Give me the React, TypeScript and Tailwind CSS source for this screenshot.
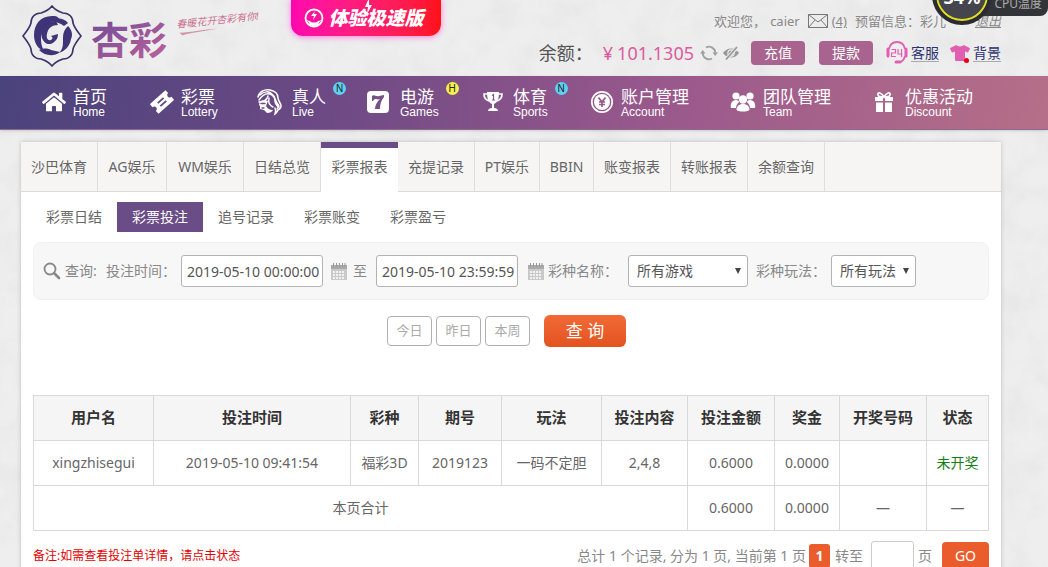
import React from 'react';
import { FaHome, FaTshirt } from 'react-icons/fa';

const TicketIcon = () => (
  <svg viewBox="0 0 24 24" className="w-6 h-6" fill="currentColor">
    <g transform="rotate(-42 12 12)">
      <path d="M1.500 5.500h21v4a2.500 2.500 0 0 0 0 5v4h-21v-4a2.500 2.500 0 0 0 0-5z" />
      <path d="M8 10h8M8 14h8" stroke="#5f4683" strokeWidth="1.800" />
    </g>
  </svg>
);

const LadyIcon = () => (
  <svg viewBox="0 0 26 28" className="w-[26px] h-7" fill="none" stroke="currentColor" strokeLinecap="round">
    <path d="M1 9C2 4 7 1 13 2c5 1 8 4 8 8 0 3 3 5 3 8 0 2-1 3-3 4-1 1-1 3-3 4 1-3 1-4 0-6" strokeWidth="1.500" />
    <path d="M2 12c4-6 8-8 13-5 4 3 2 6 4 9s3 4 1 5M3 7c4-4 9-4 12-1 3 2 3 5 4 7 1 3 3 3 3 6M2 14c5 0 8-2 9-6" strokeWidth="1.500" />
    <path d="M3 13l-1 4 1 1v3l4 1 3 3c3 0 5-1 6-3-4 0-6-2-7-4l2-5-3-1z" fill="currentColor" stroke="none" />
    <path d="M4 15.500h4M5 20h2" stroke="#6b4985" strokeWidth="1.300" />
    <path d="M12 10c-1 4 0 7 4 9" strokeWidth="1.500" />
  </svg>
);

const SevenIcon = () => (
  <svg viewBox="0 0 22 22" className="w-[22px] h-[22px]">
    <rect width="22" height="22" rx="4" fill="currentColor" />
    <path d="M5 5c2-2 4 1 7 0l5-1v2c-3 4-4 7-4 12H8c0-4 2-7 5-10-2 1-4 0-5 0s-1 1-2 2H5z" fill="#78508a" />
  </svg>
);

const CupIcon = () => (
  <svg viewBox="0 0 22 22" className="w-[22px] h-[22px]" fill="currentColor">
    <path d="M5 1h12c0 6-1 10-5 12v4c2 0 4 1 4 3H6c0-2 2-3 4-3v-4C6 11 5 7 5 1z" />
    <path d="M5 3H2c0 4 2 6 5 7M17 3h3c0 4-2 6-5 7" fill="none" stroke="currentColor" strokeWidth="1.700" />
    <path d="M10 4.500l1.500-1V9M10 9h3" fill="none" stroke="#87548a" strokeWidth="1.200" />
  </svg>
);

const CoinIcon = () => (
  <svg viewBox="0 0 24 24" className="w-6 h-6">
    <circle cx="12" cy="12" r="10.200" fill="none" stroke="currentColor" strokeWidth="1.700" />
    <circle cx="12" cy="12" r="8" fill="currentColor" />
    <path d="M8.500 7.500L12 12l3.500-4.500M12 12v5M9 12h6M9 14.500h6" fill="none" stroke="#965789" strokeWidth="1.700" />
  </svg>
);

const TeamIcon = () => (
  <svg viewBox="0 0 26 24" className="w-[26px] h-6" fill="currentColor">
    <circle cx="6" cy="6" r="3.600" />
    <circle cx="20" cy="6" r="3.600" />
    <path d="M1 18c-1-4 1-8 5-8 2 0 3 1 3 2-2 2-3 4-3 6zM25 18c1-4-1-8-5-8-2 0-3 1-3 2 2 2 3 4 3 6z" />
    <circle cx="13" cy="9.500" r="4.200" />
    <path d="M6.500 20c0-4 3-6 6.500-6s6.500 2 6.500 6c-3 2-10 2-13 0z" />
  </svg>
);

const GiftIcon = () => (
  <svg viewBox="0 0 20 22" className="w-5 h-[22px]" fill="currentColor">
    <path d="M1 6h8v4H1zM11 6h8v4h-8zM2 11.500h7V21H2zM11 11.500h7V21h-7z" />
    <path d="M10 6C8 2 3 0 4 4c0 2 3 2 6 2 3 0 6 0 6-2 1-4-4-2-6 2z" fill="none" stroke="currentColor" strokeWidth="1.700" />
  </svg>
);

const HeadsetIcon = () => (
  <svg viewBox="0 0 22 24" className="w-[22px] h-6" fill="none" stroke="#e05fb0">
    <path d="M3 8C4 3 7 1 11 1s7 2 8 7" strokeWidth="1.800" />
    <path d="M19 15c-1 4-3 6-6 6" strokeWidth="1.800" />
    <path d="M2 8v7M20 8v7" strokeWidth="3" strokeLinecap="round" />
    <path d="M10 21h4" strokeWidth="3" strokeLinecap="round" />
    <path d="M5.500 8.500h4v3.500h-4v3.500h4.500M12 8v5h4.500M15.500 8v8" strokeWidth="1.200" />
  </svg>
);

const RefreshIcon = () => (
  <svg viewBox="0 0 18 18" className="w-[18px] h-[18px]" fill="none" stroke="#a0a0a0" strokeWidth="1.800">
    <path d="M6 3.500A6.300 6.300 0 0 1 15.300 9M12 14.500A6.300 6.300 0 0 1 2.700 9" />
    <path d="M12.500 8.500h5.500L15.200 12zM0 9.500h5.500L2.800 6z" fill="#a0a0a0" stroke="none" />
  </svg>
);

const EyeOffIcon = () => (
  <svg viewBox="0 0 18 18" className="w-[18px] h-[18px]">
    <path d="M1 9c4-6 12-6 16 0-4 6-12 6-16 0z" fill="#999" />
    <circle cx="9" cy="9" r="3.200" fill="none" stroke="#eee" strokeWidth="1.200" />
    <path d="M4 15.500L15 3.500" stroke="#eee" strokeWidth="3.500" />
    <path d="M4 15.500L15 3" stroke="#999" strokeWidth="1.800" />
  </svg>
);

const CalendarIcon = () => (
  <svg viewBox="0 0 16 17" className="w-4 h-[17px] shrink-0">
    <path d="M0 2h16v4H0z" fill="#aaa" />
    <path d="M2.500 0v4M5.500 0v4M8.500 0v4M11.500 0v4M14 0v4" stroke="#999" />
    <path d="M0 6h16v11H0z" fill="#c9c9c9" />
    <path d="M2 9h12M2 12h12M2 15h12" stroke="#f2f2f2" strokeWidth="2" strokeDasharray="2 1" />
  </svg>
);

const SearchIcon = () => (
  <svg viewBox="0 0 18 18" className="w-[18px] h-[18px] shrink-0" fill="none" stroke="#888" strokeLinecap="round">
    <circle cx="7" cy="7" r="5.500" strokeWidth="1.800" />
    <path d="M11.500 11.500l4.500 4.500" strokeWidth="2.600" />
  </svg>
);

const Logo = () => (
  <svg viewBox="0 0 250 70" className="w-[250px] h-[70px]" role="img" aria-label="杏彩">
    <defs>
      <linearGradient id="brand" x1="0" y1="0" x2="1" y2="1">
        <stop offset="0" stopColor="#6c4a97" />
        <stop offset="1" stopColor="#c2629b" />
      </linearGradient>
    </defs>
    {/* flower frame with the dragon inside */}
    <path
      d="M31 2c4 5 8 6 11 7 6 0 10 4 10 10 1 4 4 8 8 13-4 5-7 9-8 13 0 6-4 10-10 10-3 1-7 2-11 7-4-5-8-6-11-7-6 0-10-4-10-10-1-4-4-8-8-13 4-5 7-9 8-13 0-6 4-10 10-10 3-1 7-2 11-7z"
      fill="none"
      stroke="#3b3268"
      strokeWidth="1.600"
    />
    <g fill="#3f3478">
      <path d="M33 12C20 11 13 20 13 31c0 8 4 14 10 16-5-9-4-21 5-27 3-3 7-4 11-4-1-2-3-4-6-4z" />
      <path d="M35 17c-10 0-16 8-14 17 2 6 8 8 12 4 3-2 4-5 4-8l-7 2c2 1 2 3 0 4-3 1-5-2-4-6 1-6 5-9 11-9z" />
      <path d="M30 17c6-4 13-3 17 2l-4 3c-4-3-8-4-13-5z" />
      <path d="M47 22c4 4 5 9 3 13-1 7-6 12-12 14 4-4 4-8 4-13 0-5 0-9 5-14z" />
      <path d="M18 46c4-2 9-2 12 0l9 2c-6 5-15 4-21-2z" />
    </g>
    <text x="70" y="50" fontSize="38" fontWeight="700" fill="url(#brand)">杏彩</text>
    <g transform="rotate(-6 156 26)" fill="#c9708f">
      <text x="156" y="24" fontSize="10" fontStyle="italic">春暖花开杏彩有你!</text>
      <path d="M158 29c12 1 26-1 38 0-14 1-26 1-35 3z" opacity=".7" />
    </g>
  </svg>
);

const navItems = [
  { title: '首页', sub: 'Home', width: 'w-[108px]', iconWidth: 'w-[31px]', icon: <FaHome className="w-6 h-6" /> },
  { title: '彩票', sub: 'Lottery', width: 'w-[107px]', iconWidth: 'w-[31px]', icon: <TicketIcon /> },
  { title: '真人', sub: 'Live', width: 'w-[110px]', iconWidth: 'w-[35px]', icon: <LadyIcon />, badge: 'N' },
  { title: '电游', sub: 'Games', width: 'w-[115px]', iconWidth: 'w-[33px]', icon: <SevenIcon />, badge: 'H' },
  { title: '体育', sub: 'Sports', width: 'w-[108px]', iconWidth: 'w-[31px]', icon: <CupIcon />, badge: 'N' },
  { title: '账户管理', sub: 'Account', width: 'w-[140px]', iconWidth: 'w-[31px]', icon: <CoinIcon /> },
  { title: '团队管理', sub: 'Team', width: 'w-[144px]', iconWidth: 'w-[33px]', icon: <TeamIcon /> },
  { title: '优惠活动', sub: 'Discount', width: 'w-[110px]', iconWidth: 'w-[31px]', icon: <GiftIcon /> },
];

const tabs = [
  { name: '沙巴体育', width: 'w-[77px]' },
  { name: 'AG娱乐', width: 'w-[69px]' },
  { name: 'WM娱乐', width: 'w-[77px]' },
  { name: '日结总览', width: 'w-[77px]' },
  { name: '彩票报表', width: 'w-[77px]' },
  { name: '充提记录', width: 'w-[77px]' },
  { name: 'PT娱乐', width: 'w-[65px]' },
  { name: 'BBIN', width: 'w-[54px]' },
  { name: '账变报表', width: 'w-[77px]' },
  { name: '转账报表', width: 'w-[77px]' },
  { name: '余额查询', width: 'w-[77px]' },
];
const subTabs = ['彩票日结', '彩票投注', '追号记录', '彩票账变', '彩票盈亏'];

const columns = [
  { name: '用户名', width: 'w-[120px]' },
  { name: '投注时间', width: 'w-[197px]' },
  { name: '彩种', width: 'w-[68px]' },
  { name: '期号', width: 'w-[83px]' },
  { name: '玩法', width: 'w-[100px]' },
  { name: '投注内容', width: 'w-[86px]' },
  { name: '投注金额', width: 'w-[87px]' },
  { name: '奖金', width: 'w-[65px]' },
  { name: '开奖号码', width: 'w-[87px]' },
  { name: '状态', width: 'w-[62px]' },
];

const record = ['xingzhisegui', '2019-05-10 09:41:54', '福彩3D', '2019123', '一码不定胆', '2,4,8', '0.6000', '0.0000', ''];

const Header = () => (
  <header className="flex items-start h-[76px] pl-[21px] pr-[47px]">
    <div className="w-[270px] shrink-0 pt-1">
      <Logo />
    </div>
    <a
      href="#lite"
      className="flex items-center justify-center gap-1 w-[150px] h-9 pr-1 shrink-0 rounded-b-xl bg-linear-to-r from-[#ff04b0] to-[#ff1212] shadow-[0_1px_6px_#ff7be0] text-white"
    >
      <svg viewBox="0 0 20 20" className="w-5 h-5">
        <circle cx="10" cy="10" r="8.500" fill="none" stroke="#fff" strokeWidth="1.800" />
        <path d="M1 10c1 3 4 3 5 7l4 2 4-2c1-4 4-4 5-7-1 2-3 3-5 3-1 2-7 2-8 0-2 0-4-1-5-3z" fill="#fff" />
        <path d="M11 3L7 8h3l-1 4 4-6h-3z" fill="#fff" />
      </svg>
      <span className="relative text-[19px] leading-6 font-black italic">
        体验极速版
        <svg viewBox="0 0 8 16" className="absolute left-9 -top-2 w-2 h-4" fill="#fff">
          <path d="M5 0L1 9h3l-1 7 5-9H5z" />
        </svg>
      </span>
    </a>

    <div className="flex-1 flex flex-col items-end pt-[11px]">
      <div className="flex items-center text-[13px] leading-5 text-[#888] whitespace-nowrap">
        <span>欢迎您，</span>
        <span className="ml-1">caier</span>
        <a href="#mail" className="flex items-center gap-1 ml-2">
          <svg viewBox="0 0 20 14" className="w-5 h-3.5" fill="none" stroke="#777">
            <path d="M.5.5h19v13H.5zM.5.5L10 8l9.500-7.500M.5 13.500L7 6M19.500 13.500L13 6" />
          </svg>
          <span className="underline">(4)</span>
        </a>
        <span className="ml-2">预留信息：</span>
        <span className="w-[55px]">彩儿</span>
        <a href="#logout" className="italic underline">退出</a>
      </div>
      <div className="flex items-center mt-2.5 h-6 whitespace-nowrap">
        <span className="text-lg text-[#555]">余额：</span>
        <span className="ml-2.5 text-lg text-[#dd5a9e]">¥</span>
        <span className="ml-1 mr-1.5 text-lg text-[#dd5a9e]">101.1305</span>
        <button aria-label="刷新" className="flex mr-1"><RefreshIcon /></button>
        <button aria-label="隐藏余额" className="flex mr-[11px]"><EyeOffIcon /></button>
        <button className="w-[54px] h-6 mr-3.5 rounded bg-[#a8648e] text-sm text-white">充值</button>
        <button className="w-[54px] h-6 mr-[13px] rounded bg-[#a8648e] text-sm text-white">提款</button>
        <a href="#service" className="flex items-center gap-[3px] mr-[11px] text-sm leading-[17px] text-[#2c3270]">
          <HeadsetIcon />
          <span className="border-b border-[#aaa]">客服</span>
        </a>
        <a href="#skin" className="relative flex items-center gap-[3px] text-sm leading-[17px] text-[#2c3270]">
          <FaTshirt className="w-5 h-5 text-[#e05fb0]" />
          <span className="absolute left-3.5 bottom-0 w-[5px] h-[5px] rounded-full bg-[#e60012]" />
          <span className="border-b border-[#aaa]">背景</span>
        </a>
      </div>
    </div>
  </header>
);

/* Floating desktop monitor, hangs over the top right corner */
const CpuWidget = () => (
  <div className="absolute right-0 top-0 w-[116px] h-[27px] overflow-hidden">
    <div className="absolute right-0 top-0 w-[72px] h-4 rounded-br-lg bg-[#333438] text-right pr-1.5 text-xs leading-2 text-[#aaa]">CPU温度</div>
    <div className="absolute left-0 -top-[35px] flex items-end justify-center w-[60px] h-[60px] pb-2.5 rounded-full border-4 border-[#2b2c33] bg-[#45464d] shadow-[inset_0_0_0_2px_#e2e21c] text-lg font-bold text-white">
      34%
    </div>
  </div>
);

const MainNav = () => (
  <nav className="flex h-[54px] pl-[42px] bg-[linear-gradient(100deg,#4b437c_0%,#6b4984_30%,#98588c_62%,#b66f88_100%)] border-b border-[#8d6a94] text-white shadow-sm">
    {navItems.map((item) => (
      <a key={item.title} href="#nav" className={`flex shrink-0 ${item.width}`}>
        <span className={`flex items-center shrink-0 h-[52px] ${item.iconWidth}`}>{item.icon}</span>
        <span className="pt-3 whitespace-nowrap">
          <span className="block text-[17px] leading-[17px]">{item.title}</span>
          <span className="block font-['Liberation_Sans',sans-serif] text-xs leading-[14px]">{item.sub}</span>
        </span>
        {item.badge && (
          <span
            className={`mt-1.5 ml-[7px] w-[13px] h-[13px] rounded-full text-center font-['Liberation_Sans',sans-serif] text-[10px] leading-[13px] text-[#222] ${
              item.badge === 'H' ? 'bg-[#f6f04c]' : 'bg-[#5fd0f3]'
            }`}
          >
            {item.badge}
          </span>
        )}
      </a>
    ))}
  </nav>
);

const SelectBox = ({ id, label, width }: { id: string; label: string; width: string }) => (
  <span className={`relative shrink-0 ${width}`}>
    <select id={id} className="w-full h-8 pl-2 appearance-none rounded-[3px] border border-[#b3b3b3] bg-white text-[#555] text-sm">
      <option>{label}</option>
    </select>
    <svg viewBox="0 0 6 6" className="absolute right-[7px] top-[13px] w-1.5 h-1.5 pointer-events-none" fill="#444">
      <path d="M0 0h6L3 6z" />
    </svg>
  </span>
);

const Filters = () => (
  <form>
    <div className="flex items-center mx-3 h-[58px] pl-[9px] rounded-lg border border-[#f1f1f1] bg-[#f7f7f7] text-sm text-[#888] whitespace-nowrap">
      <SearchIcon />
      <span className="w-[41px] ml-1">查询:</span>
      <label htmlFor="from" className="w-[75px]">投注时间：</label>
      <input id="from" defaultValue="2019-05-10 00:00:00" className="w-[142px] h-8 pl-[5px] rounded-[3px] border border-[#b3b3b3] bg-white text-[#555]" />
      <span className="flex ml-2 mr-1.5"><CalendarIcon /></span>
      <label htmlFor="to" className="w-[23px]">至</label>
      <input id="to" defaultValue="2019-05-10 23:59:59" className="w-[142px] h-8 pl-[5px] rounded-[3px] border border-[#b3b3b3] bg-white text-[#555]" />
      <span className="flex ml-2.5 mr-1"><CalendarIcon /></span>
      <label htmlFor="game" className="w-20">彩种名称：</label>
      <SelectBox id="game" label="所有游戏" width="w-[120px]" />
      <label htmlFor="play" className="w-[75px] ml-2">彩种玩法：</label>
      <SelectBox id="play" label="所有玩法" width="w-[85px]" />
    </div>
    <div className="flex items-center justify-center gap-1 h-8 mt-[15px] pr-[9px]">
      {['今日', '昨日', '本周'].map((day) => (
        <button key={day} type="button" className="w-[45px] h-[30px] rounded border border-[#b0b0b0] bg-white text-[13px] text-[#aaa]">
          {day}
        </button>
      ))}
      <button type="button" className="w-[82px] h-8 ml-2.5 rounded-md bg-linear-to-b from-[#f26a37] to-[#e2531f] text-[17px] text-white">查 询</button>
    </div>
  </form>
);

const Records = () => (
  <table className="w-full table-fixed border-collapse text-center text-sm text-[#666]">
    <thead>
      <tr className="h-[45px] bg-[#f5f5f5] text-[15px] text-[#333]">
        {columns.map((col) => (
          <th key={col.name} className={`border border-[#d9d9d9] font-bold ${col.width}`}>{col.name}</th>
        ))}
      </tr>
    </thead>
    <tbody>
      <tr className="h-[45px]">
        {record.map((cell, i) => (
          <td key={i} className="border border-[#d9d9d9]">{cell}</td>
        ))}
        <td className="border border-[#d9d9d9]"><a href="#detail" className="text-[#128012]">未开奖</a></td>
      </tr>
      <tr className="h-[45px]">
        <td colSpan={6} className="border border-[#d9d9d9]">本页合计</td>
        <td className="border border-[#d9d9d9]">0.6000</td>
        <td className="border border-[#d9d9d9]">0.0000</td>
        <td className="border border-[#d9d9d9]">—</td>
        <td className="border border-[#d9d9d9]">—</td>
      </tr>
    </tbody>
  </table>
);

const App = () => {
  return (
    <div className="relative isolate h-screen overflow-hidden bg-[#eeeeee] font-['Noto_Sans','Noto_Sans_CJK_SC',sans-serif]">
      {/* paper texture */}
      <svg className="absolute inset-0 -z-10 w-full h-full opacity-20">
        <filter id="paper">
          <feTurbulence type="fractalNoise" baseFrequency="0.035" numOctaves="4" seed="8" />
          <feColorMatrix values="0 0 0 0 .6  0 0 0 0 .6  0 0 0 0 .6  1.800 0 0 0 -.7" />
        </filter>
        <rect width="100%" height="100%" filter="url(#paper)" />
      </svg>

      <Header />
      <CpuWidget />
      <MainNav />

      <main className="mt-3 ml-[21px] mr-[47px] pb-6 bg-white shadow-[0_0_4px_#bbb]">
        <div className="flex h-[50px] bg-[#f6f5f4] border-b border-[#dcdad8]">
          {tabs.map((tab) => (
            <button
              key={tab.name}
              className={`shrink-0 text-sm text-[#666] whitespace-nowrap ${tab.width} ${
                tab.name === '彩票报表'
                  ? 'h-[50px] pb-1.5 border-t-[6px] border-t-[#6a4c86] bg-white'
                  : 'h-[49px] border-r border-[#e0dedc]'
              }`}
            >
              {tab.name}
            </button>
          ))}
        </div>

        <div className="flex px-2.5 py-2.5">
          {subTabs.map((tab) => (
            <button
              key={tab}
              className={tab === '彩票投注' ? 'w-[86px] h-[30px] bg-[#6a4c86] text-sm text-white' : 'w-[86px] h-[30px] text-sm text-[#666]'}
            >
              {tab}
            </button>
          ))}
        </div>

        <Filters />

        <div className="mt-12 mx-3">
          <Records />
          <div className="flex items-center justify-between mt-2.5 whitespace-nowrap">
            <p className="text-xs text-[#e00000]">备注:如需查看投注单详情，请点击状态</p>
            <div className="flex items-center text-sm text-[#888]">
              <span>总计 1 个记录, 分为 1 页, 当前第 1 页</span>
              <button className="w-[21px] h-6 ml-[3px] mr-[5px] rounded-[3px] bg-[#ea5c2c] font-bold text-white">1</button>
              <label htmlFor="page">转至</label>
              <input id="page" className="w-[43px] h-[29px] ml-2 mr-1 px-1 rounded-[3px] border border-[#ccc] bg-white" />
              <span>页</span>
              <button className="w-[47px] h-7 ml-2.5 rounded bg-[#ea5c2c] text-white">GO</button>
            </div>
          </div>
        </div>
      </main>
    </div>
  );
};

export default App;
